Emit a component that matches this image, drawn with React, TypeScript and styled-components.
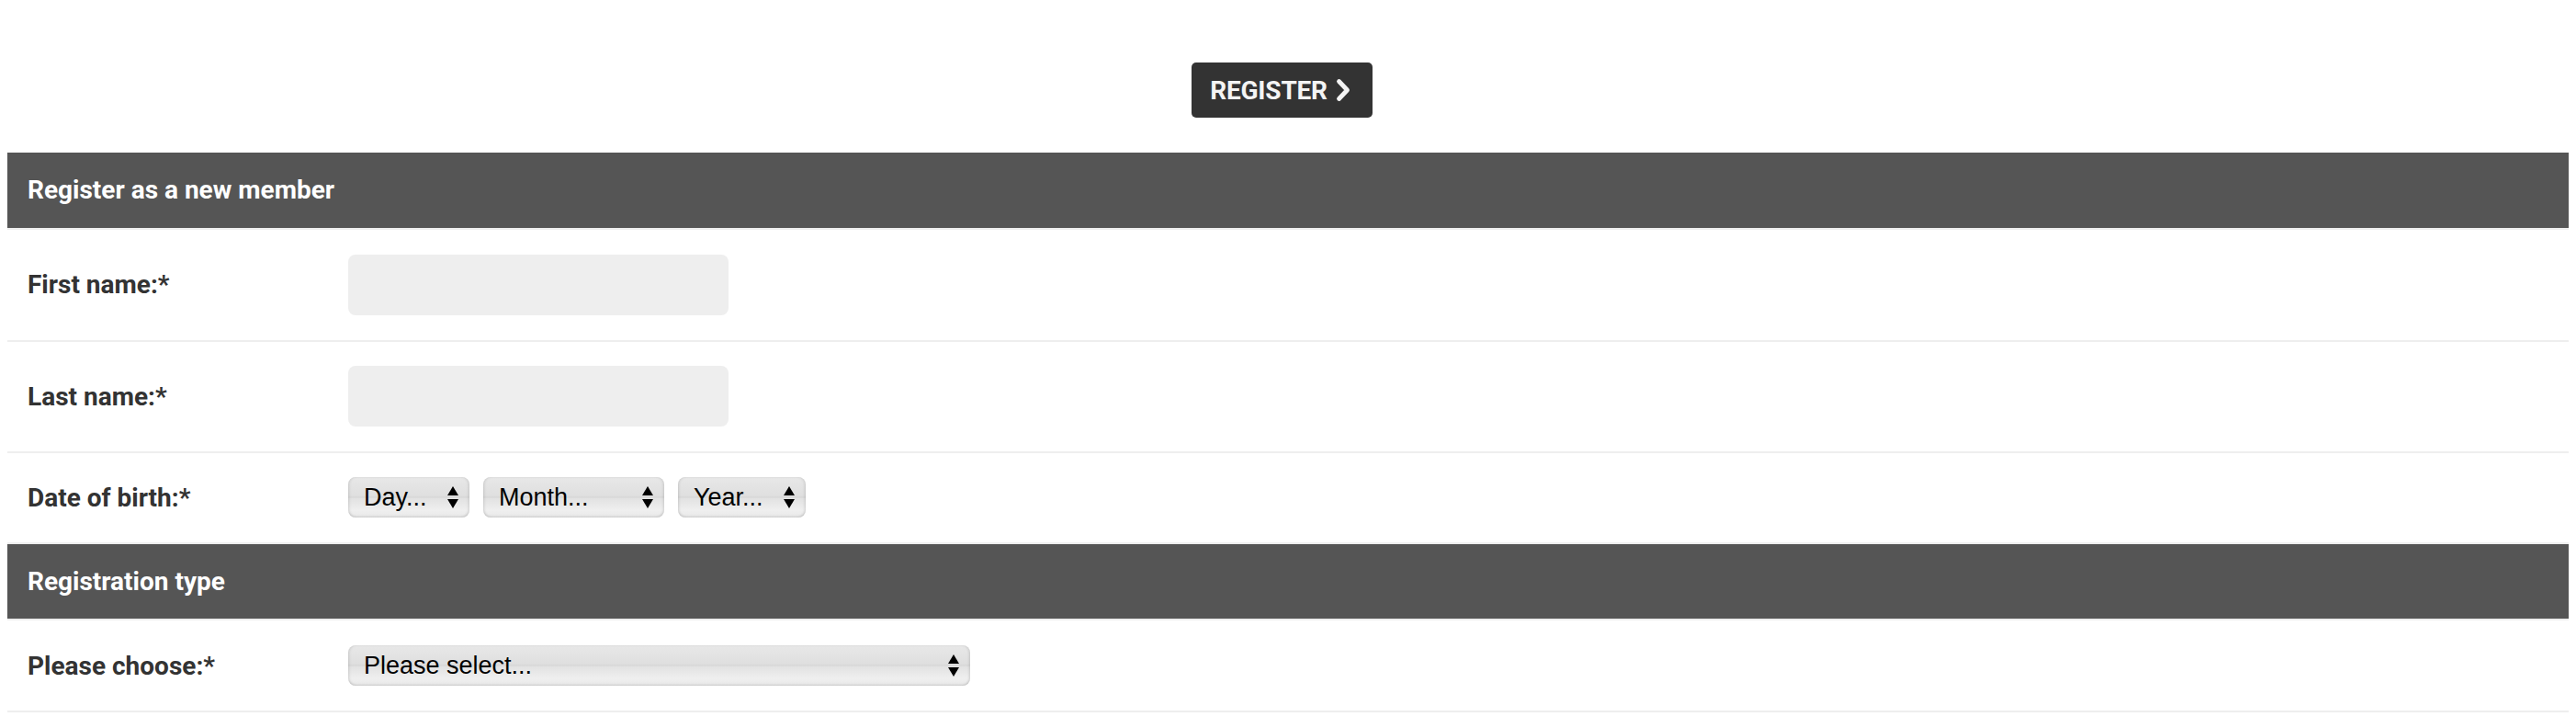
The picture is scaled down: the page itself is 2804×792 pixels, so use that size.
import React from "react";
import styled, { createGlobalStyle } from "styled-components";

const Global = createGlobalStyle`
  html, body { margin: 0; padding: 0; background: #ffffff; }
  body { margin: 8px; font-family: Roboto, "Liberation Sans", Arial, sans-serif; color: #333; }
  * { box-sizing: border-box; }
`;

const Page = styled.div`
  display: flex;
  flex-direction: column;
`;

const ActionBar = styled.div`
  display: flex;
  justify-content: center;
  padding: 60px 13px 38px 0;
`;

const RegisterButton = styled.button`
  display: inline-flex;
  align-items: center;
  gap: 9px;
  height: 60px;
  padding: 0 23px 0 20px;
  border: none;
  border-radius: 5px;
  background: #333333;
  color: #f4f4f4;
  font-family: Roboto, "Liberation Sans", Arial, sans-serif;
  font-weight: 700;
  font-size: 28px;
  text-transform: uppercase;
  letter-spacing: -0.2px;
  cursor: pointer;
`;

const Section = styled.section`
  display: flex;
  flex-direction: column;
`;

const SectionHeader = styled.h2`
  margin: 0;
  display: flex;
  align-items: center;
  min-height: 83.5px;
  padding: 0 22px;
  background: #555555;
  color: #ffffff;
  font-size: 28px;
  font-weight: 700;
  border-bottom: 2px solid #eeeeee;
`;

const Row = styled.div<{ $pad?: number }>`
  display: grid;
  grid-template-columns: 371px 1fr;
  align-items: center;
  padding: ${(p) => p.$pad ?? 26.5}px 0;
  border-bottom: 2px solid #eeeeee;
`;

const Label = styled.label`
  padding-left: 22px;
  font-size: 28px;
  font-weight: 700;
  color: #333333;
`;

const Field = styled.div`
  display: flex;
  align-items: center;
  gap: 15px;
`;

const TextInput = styled.input`
  width: 414px;
  height: 66px;
  border: none;
  border-radius: 8px;
  background: #eeeeee;
  outline: none;
  padding: 0 14px;
  font-size: 27px;
  font-family: "Liberation Sans", Arial, sans-serif;
`;

const SelectWrap = styled.div<{ $w: number }>`
  position: relative;
  width: ${(p) => p.$w}px;
  height: 44px;
  flex: none;
`;

const NativeSelect = styled.select`
  appearance: none;
  -webkit-appearance: none;
  width: 100%;
  height: 100%;
  border: none;
  border-radius: 8px;
  padding: 0 34px 0 17px;
  font-family: "Liberation Sans", Arial, sans-serif;
  font-size: 27px;
  color: #000000;
  background: linear-gradient(
    to bottom,
    #e8e8e8 0%,
    #dfdfdf 46%,
    #d7d7d7 50%,
    #e2e2e2 53%,
    #efefef 82%,
    #e9e9e9 100%
  );
  box-shadow: inset 2px 0 3px -1px rgba(0, 0, 0, 0.13),
    inset -2px 0 3px -1px rgba(0, 0, 0, 0.13),
    inset 0 -3px 3px -2px rgba(0, 0, 0, 0.1);
  outline: none;
`;

const Arrows = styled.svg`
  position: absolute;
  right: 12px;
  top: 50%;
  transform: translateY(-50%);
  pointer-events: none;
`;

function Select({ w, placeholder }: { w: number; placeholder: string }) {
  return (
    <SelectWrap $w={w}>
      <NativeSelect defaultValue="">
        <option value="">{placeholder}</option>
      </NativeSelect>
      <Arrows width="12" height="24" viewBox="0 0 12 24">
        <polygon points="6,0 12,10 0,10" fill="#000" />
        <polygon points="0,14 12,14 6,24" fill="#000" />
      </Arrows>
    </SelectWrap>
  );
}

export default function App() {
  return (
    <Page>
      <Global />
      <ActionBar>
        <RegisterButton type="button">
          Register
          <svg width="17" height="26" viewBox="0 0 17 26">
            <path
              d="M3.5 3.5 L12.5 13 L3.5 22.5"
              fill="none"
              stroke="#f4f4f4"
              strokeWidth="4.8"
              strokeLinejoin="round"
              strokeLinecap="round"
            />
          </svg>
        </RegisterButton>
      </ActionBar>

      <Section>
        <SectionHeader>Register as a new member</SectionHeader>
        <Row $pad={27}>
          <Label>First name:*</Label>
          <Field>
            <TextInput type="text" />
          </Field>
        </Row>
        <Row $pad={26.5}>
          <Label>Last name:*</Label>
          <Field>
            <TextInput type="text" />
          </Field>
        </Row>
        <Row $pad={26.5}>
          <Label>Date of birth:*</Label>
          <Field>
            <Select w={132} placeholder="Day..." />
            <Select w={197} placeholder="Month..." />
            <Select w={139} placeholder="Year..." />
          </Field>
        </Row>
      </Section>

      <Section>
        <SectionHeader>Registration type</SectionHeader>
        <Row $pad={27}>
          <Label>Please choose:*</Label>
          <Field>
            <Select w={677} placeholder="Please select..." />
          </Field>
        </Row>
      </Section>
    </Page>
  );
}
